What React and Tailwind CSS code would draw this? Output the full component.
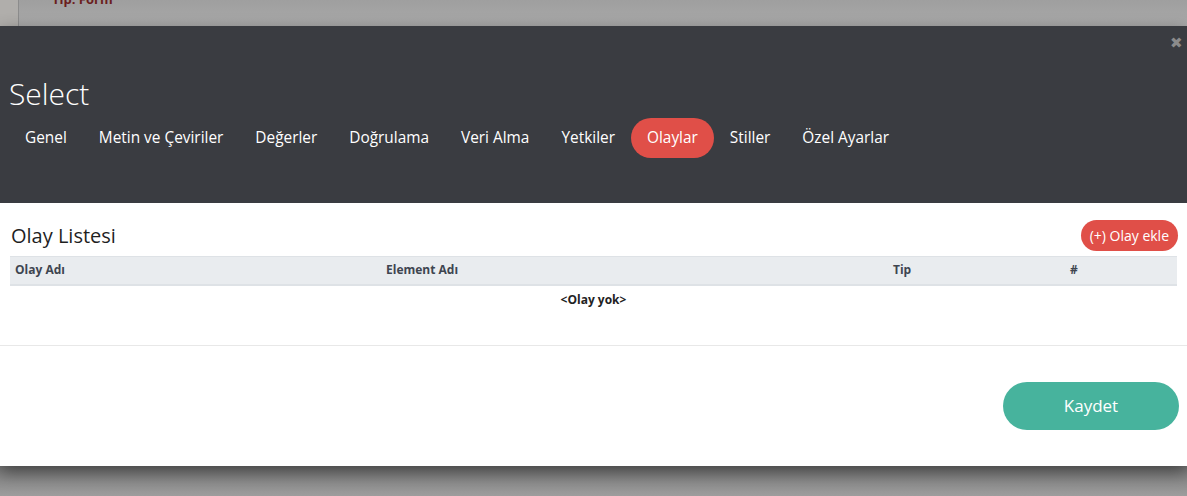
import React from 'react'

const tabs = [
  'Genel',
  'Metin ve Çeviriler',
  'Değerler',
  'Doğrulama',
  'Veri Alma',
  'Yetkiler',
  'Olaylar',
  'Stiller',
  'Özel Ayarlar',
]

export default function App() {
  const active = 'Olaylar'

  return (
    <div
      className="w-[1187px] h-[496px] overflow-hidden bg-[#a3a3a3] flex flex-col"
      style={{ fontFamily: '"Open Sans", "Noto Sans", sans-serif' }}
    >
      {/* arka plan sayfa */}
      <div className="h-[26px] shrink-0 flex bg-gradient-to-b from-[#9f9f9f] to-[#a9a9a9] overflow-hidden">
        <div className="w-[19px] bg-[#b0aeab] border-r border-[#8c8c8c]" />
        <div className="ml-[33px] -mt-[10px] text-[13px] font-bold text-[#6b1e1e]">Tip: Form</div>
      </div>

      {/* modal */}
      <div className="relative z-10 h-[440px] shrink-0 flex flex-col bg-white shadow-[0_6px_16px_rgba(0,0,0,0.45)]">
        {/* başlık */}
        <header className="relative h-[177px] bg-[#3a3c41] px-[9px] pt-[48px]">
          <button className="absolute right-[4px] top-[9px] text-[#8b8b8b] text-[15px] leading-none">✖</button>
          <h1 className="text-white text-[30px] font-light leading-[40px]">Select</h1>
          <nav className="flex mt-[4px]">
            {tabs.map(t => (
              <span
                key={t}
                className={`h-[40px] px-4 flex items-center rounded-full text-[15.4px] text-white ${
                  t === active ? 'bg-[#e04f48]' : ''
                }`}
              >
                {t}
              </span>
            ))}
          </nav>
        </header>

        {/* olay listesi */}
        <section className="h-[143px] border-b border-[#e8e8e8] px-[10px] pt-[17px]">
          <div className="flex items-center justify-between h-[31px] mb-[5px]">
            <h2 className="pl-px text-[20px] font-medium text-[#1f1f1f]">Olay Listesi</h2>
            <button className="h-[31px] px-[9px] mr-[-1px] rounded-full bg-[#e04f48] text-white text-[14px]">
              (+) Olay ekle
            </button>
          </div>
          <table className="w-full table-fixed text-[12px] text-[#3e4550]">
            <thead>
              <tr className="bg-[#e9ecef] border-t border-[#dee2e6] border-b-2">
                <th className="w-[371px] h-[28px] px-[5px] text-left font-bold">Olay Adı</th>
                <th className="w-[507px] px-[5px] text-left font-bold">Element Adı</th>
                <th className="w-[177px] px-[5px] text-left font-bold">Tip</th>
                <th className="px-[5px] text-left font-bold">#</th>
              </tr>
            </thead>
            <tbody>
              <tr>
                <td colSpan={4} className="h-[30px] text-center font-bold text-[#222]">
                  &lt;Olay yok&gt;
                </td>
              </tr>
            </tbody>
          </table>
        </section>

        {/* alt kısım */}
        <footer className="flex-1 flex items-start justify-end pt-[36px] pr-[8px]">
          <button className="w-[176px] h-[48px] rounded-full bg-[#47b39d] text-white text-[17px]">
            Kaydet
          </button>
        </footer>
      </div>

      <div className="flex-1 bg-gradient-to-b from-[#7a7a7a] to-[#9d9d9d]" />
    </div>
  )
}
